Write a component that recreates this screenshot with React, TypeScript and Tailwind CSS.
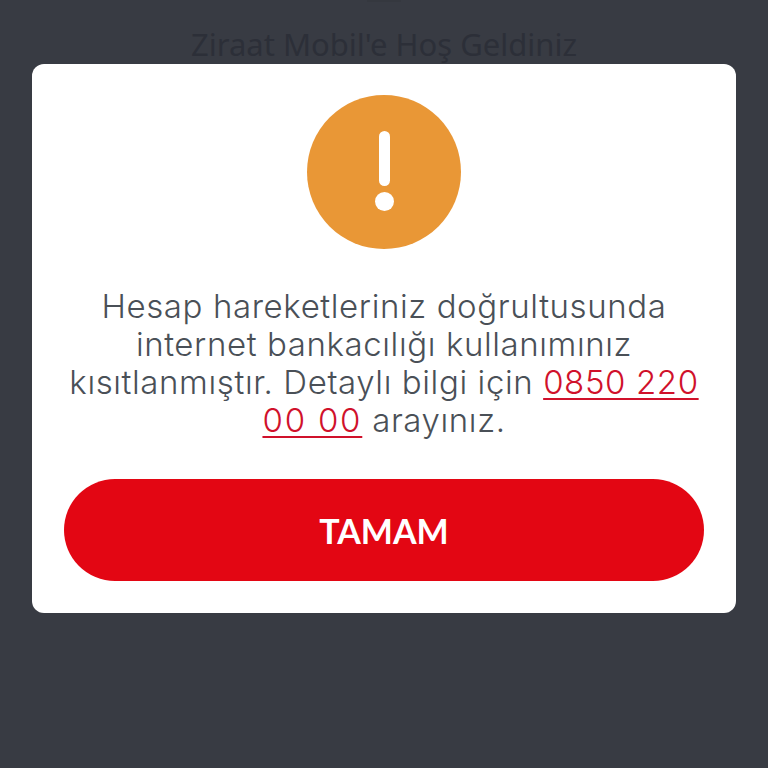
const App = () => (
  <div className="flex h-[768px] w-[768px] flex-col items-center overflow-hidden bg-[#383b43] font-['Inter','Liberation_Sans',sans-serif]">
    <div className="h-[2px] w-[34px] shrink-0 bg-[#35383f]" />
    <h1 className="flex h-[62px] items-end font-['Noto_Sans',sans-serif] text-[31px] leading-[40px] font-normal text-[#2c2f38]">
      Ziraat Mobil'e Hoş Geldiniz
    </h1>

    <div className="flex w-[704px] flex-col items-center rounded-[12px] bg-white px-8 pt-[31px] pb-8">
      <div className="flex h-[154px] w-[154px] flex-col items-center rounded-full bg-[#e99736] pt-[36px]">
        <div className="h-[55px] w-[11px] rounded-full bg-white" />
        <div className="mt-[6px] h-[19px] w-[19px] rounded-full bg-white" />
      </div>

      <p className="mt-[38px] w-[650px] -mx-[5px] text-center text-[33px] leading-[38px] font-light tracking-[0.6px] text-[#4a5057]">
        Hesap hareketleriniz doğrultusunda
        <br />
        internet bankacılığı kullanımınız
        <br />
        kısıtlanmıştır. Detaylı bilgi için{" "}
        <span className="text-[#d0112b] underline decoration-2 underline-offset-[4px]">
          0850 220
          <br />
          <span className="tracking-[1.8px]">00 00</span>
        </span>{" "}
        arayınız.
      </p>

      <button className="mt-[40px] flex h-[102px] w-[640px] items-center justify-center rounded-full bg-[#e30613] font-['Lato',sans-serif] text-[34px] font-bold text-white">
        TAMAM
      </button>
    </div>
  </div>
);

export default App;
